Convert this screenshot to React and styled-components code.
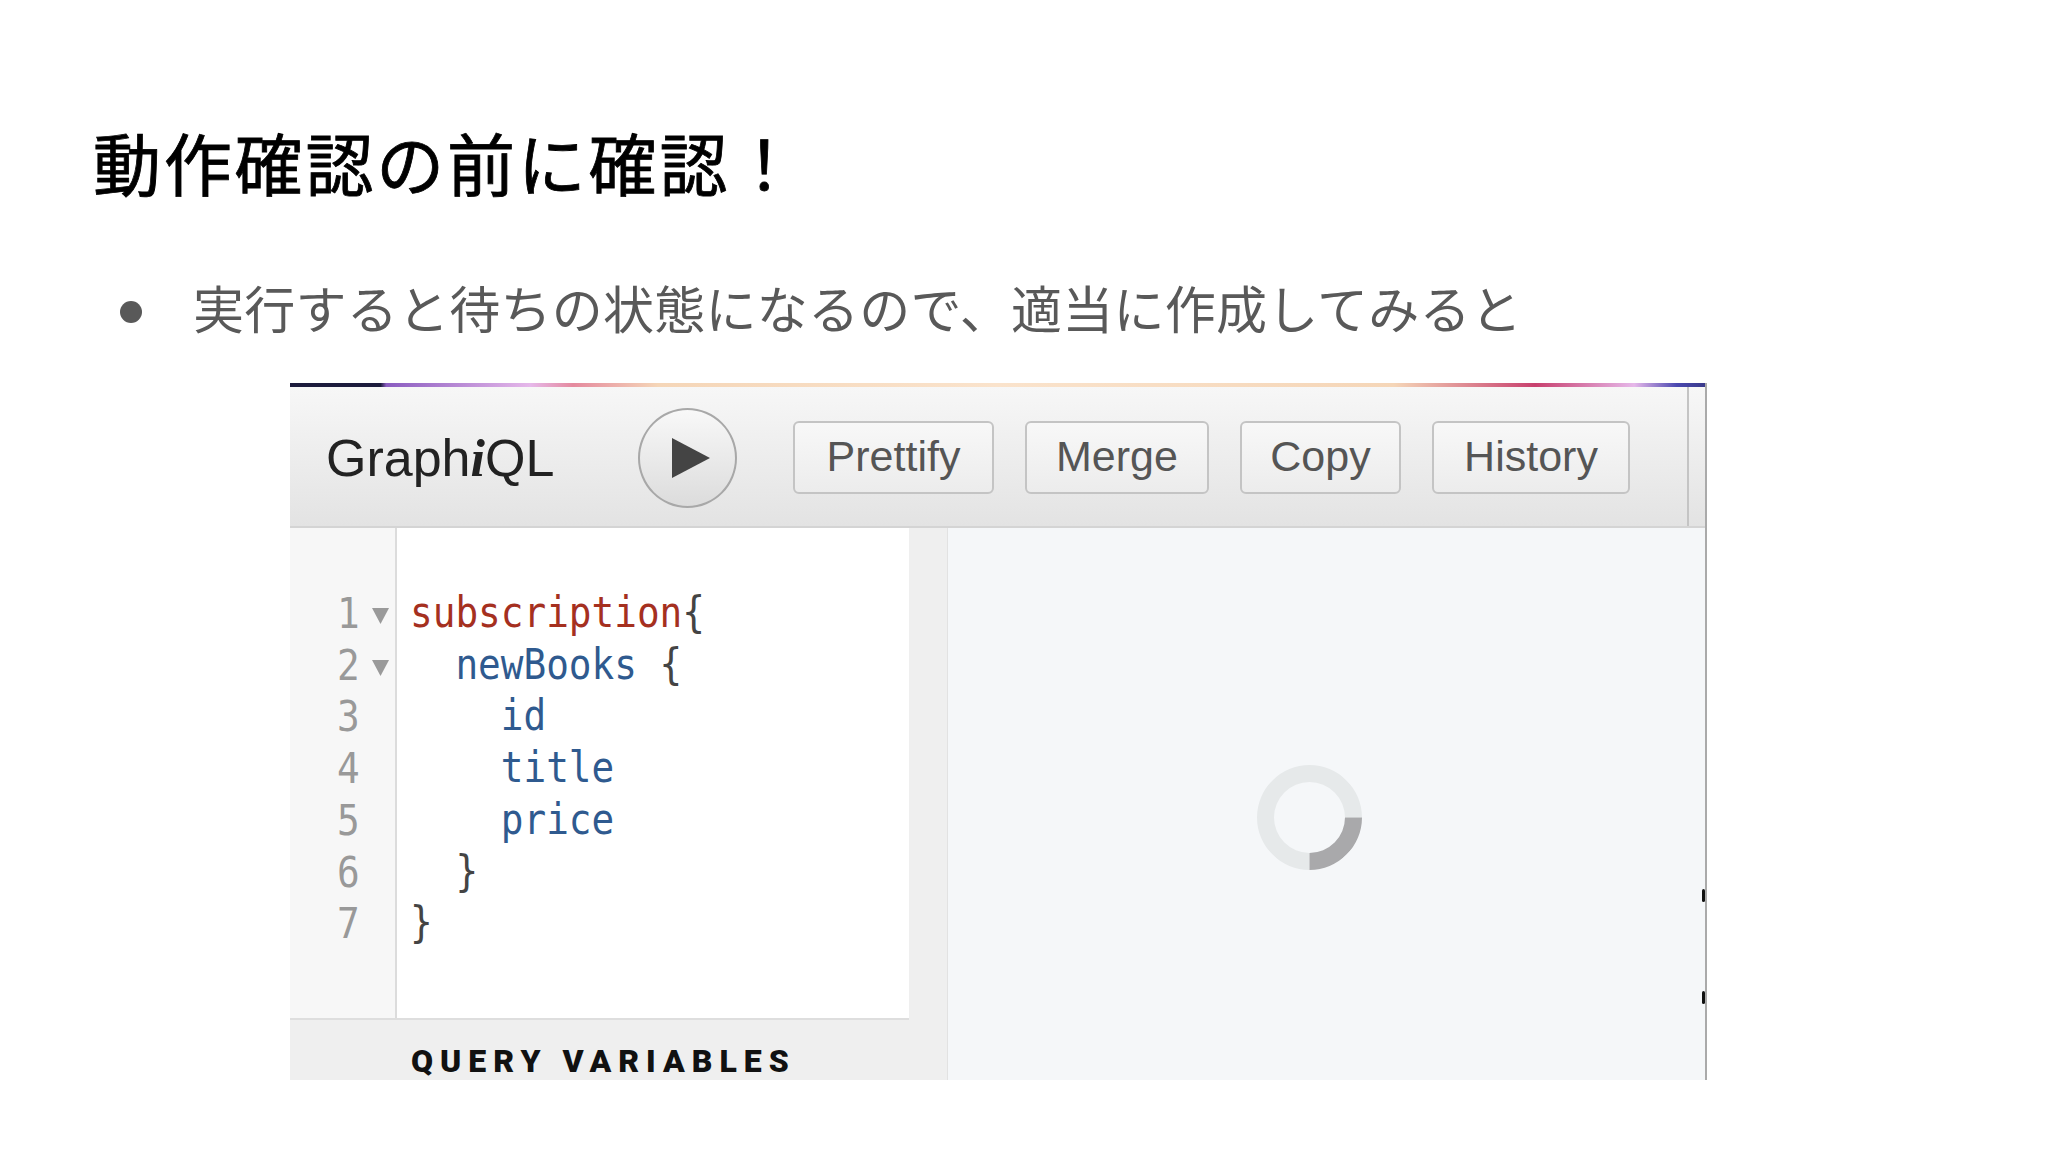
import styled, { createGlobalStyle } from "styled-components";

const GlobalStyle = createGlobalStyle`
  html, body {
    margin: 0;
    padding: 0;
    background: #fff;
  }
`;

const CODE_LINES = [
  { no: 1, fold: true, indent: 0, text: "subscription", color: "#a5301f", tail: "{" },
  { no: 2, fold: true, indent: 2, text: "newBooks", color: "#2f5a8f", tail: " {" },
  { no: 3, indent: 4, text: "id", color: "#2f5a8f" },
  { no: 4, indent: 4, text: "title", color: "#2f5a8f" },
  { no: 5, indent: 4, text: "price", color: "#2f5a8f" },
  { no: 6, indent: 2, tail: "}" },
  { no: 7, indent: 0, tail: "}" },
];

const BUTTONS = [
  { label: "Prettify", width: 201 },
  { label: "Merge", width: 184 },
  { label: "Copy", width: 161 },
  { label: "History", width: 198 },
];

const App = () => {
  return (
    <Slide>
      <GlobalStyle />
      <Title>動作確認の前に確認！</Title>
      <Bullet>
        <Dot />
        <BulletText>実行すると待ちの状態になるので、適当に作成してみると</BulletText>
      </Bullet>
      <Shot>
        <RainbowBar />
        <Toolbar>
          <Logo>
            Graph<em>i</em>QL
          </Logo>
          <PlayButton>
            <svg width="38" height="40" viewBox="0 0 38 40">
              <polygon points="0,0 38,20 0,40" fill="#444" />
            </svg>
          </PlayButton>
          <ButtonRow>
            {BUTTONS.map((b) => (
              <ToolButton key={b.label} $width={b.width}>
                {b.label}
              </ToolButton>
            ))}
          </ButtonRow>
        </Toolbar>
        <Panes>
          <EditorColumn>
            <Editor>
              <Gutter>
                {CODE_LINES.map((l) => (
                  <GutterRow key={l.no}>
                    <LineNo>{l.no}</LineNo>
                    {l.fold && (
                      <svg width="17" height="17" viewBox="0 0 17 17">
                        <polygon points="0,1 17,1 8.5,17" fill="#9a9a9a" />
                      </svg>
                    )}
                  </GutterRow>
                ))}
              </Gutter>
              <Code>
                {CODE_LINES.map((l) => (
                  <CodeLine key={l.no} $indent={l.indent}>
                    <Token $color={l.color}>{l.text}</Token>
                    {l.tail}
                  </CodeLine>
                ))}
              </Code>
            </Editor>
            <VariablesBar>QUERY VARIABLES</VariablesBar>
          </EditorColumn>
          <Divider />
          <ResultPane>
            <Spinner />
            <EdgeTick $top={361} />
            <EdgeTick $top={463} />
          </ResultPane>
        </Panes>
      </Shot>
    </Slide>
  );
};

const Slide = styled.div`
  width: 2048px;
  height: 1152px;
  overflow: hidden;
  background: #fff;
  font-family: "Noto Sans CJK JP", sans-serif;
`;
const Title = styled.h1`
  margin: 0;
  padding: 117px 0 0 93px;
  font-size: 68px;
  line-height: 90px;
  font-weight: 400;
  letter-spacing: 2.8px;
  -webkit-text-stroke: 0.8px #000;
  color: #000;
`;
const Bullet = styled.div`
  display: flex;
  align-items: center;
  margin-top: 65px;
  padding-left: 120px;
  height: 70px;
`;
const Dot = styled.span`
  width: 22px;
  height: 22px;
  border-radius: 50%;
  background: #595959;
  margin: 10px 51px 0 0;
`;
const BulletText = styled.span`
  font-size: 51px;
  line-height: 70px;
  font-weight: 400;
  letter-spacing: 0.25px;
  color: #595959;
`;
const Shot = styled.div`
  width: 1417px;
  height: 697px;
  margin: 41px 0 0 290px;
  overflow: hidden;
  display: flex;
  flex-direction: column;
  font-family: "Liberation Sans", Arial, sans-serif;
  border-right: 2px solid #aaaaaa;
  box-sizing: border-box;
`;
const RainbowBar = styled.div`
  height: 4px;
  flex: none;
  background: linear-gradient(
    90deg,
    #1c1b3c 0,
    #1c1b3c 6.4%,
    #8a5cc0 6.8%,
    #e6b8ea 17%,
    #e58a9e 20%,
    #f5d6b8 26%,
    #fae3cc 50%,
    #f5d6b8 78%,
    #c8406e 88%,
    #e6b8ea 95%,
    #4a48b0 98%,
    #3a3a8a 100%
  );
`;
const Toolbar = styled.div`
  height: 141px;
  flex: none;
  box-sizing: border-box;
  display: flex;
  align-items: center;
  padding: 2px 0 0 36px;
  background: linear-gradient(#f7f7f7, #e3e3e3);
  border-bottom: 2px solid #d4d4d4;
  position: relative;
  &::after {
    content: "";
    position: absolute;
    top: 0;
    bottom: 0;
    right: 16px;
    width: 2px;
    background: #c4c4c4;
  }
`;
const Logo = styled.div`
  width: 312px;
  font-size: 52px;
  color: #222;
  em {
    font-family: "Liberation Serif", serif;
    font-style: italic;
    font-weight: 700;
  }
`;
const PlayButton = styled.div`
  width: 99px;
  height: 100px;
  box-sizing: border-box;
  border-radius: 50%;
  border: 2px solid #a8a8a8;
  background: linear-gradient(#f8f8f8, #dcdcdc);
  display: flex;
  align-items: center;
  justify-content: center;
  padding-left: 6px;
  svg {
    display: block;
  }
`;
const ButtonRow = styled.div`
  display: flex;
  gap: 31px;
  margin-left: 56px;
`;
const ToolButton = styled.div`
  width: ${(p) => p.$width}px;
  height: 73px;
  box-sizing: border-box;
  border: 2px solid #c4c4c4;
  border-radius: 6px;
  background: linear-gradient(#f8f8f8, #ececec);
  color: #555;
  font-size: 43px;
  line-height: 67px;
  text-align: center;
`;
const Panes = styled.div`
  flex: 1;
  display: flex;
  min-height: 0;
`;
const EditorColumn = styled.div`
  width: 619px;
  display: flex;
  flex-direction: column;
`;
const Editor = styled.div`
  height: 492px;
  flex: none;
  display: flex;
  box-sizing: border-box;
  border-bottom: 2px solid #dedede;
  font-family: "DejaVu Sans Mono", monospace;
  font-size: 37.7px;
  line-height: 51.7px;
`;
const Gutter = styled.div`
  width: 107px;
  flex: none;
  box-sizing: border-box;
  padding-top: 60px;
  background: #f7f7f7;
  border-right: 2px solid #dcdcdc;
`;
const GutterRow = styled.div`
  display: flex;
  align-items: center;
  padding-left: 47px;
  svg {
    margin: 3px 0 0 11px;
  }
`;
const LineNo = styled.span`
  width: 24px;
  color: #999;
  transform: scaleY(1.14);
`;
const Code = styled.div`
  flex: 1;
  padding: 60px 0 0 13px;
  background: #fff;
  color: #444;
`;
const CodeLine = styled.div`
  padding-left: ${(p) => p.$indent * 22.7}px;
  white-space: pre;
  transform: scaleY(1.12);
`;
const Token = styled.span`
  color: ${(p) => p.$color};
`;
const VariablesBar = styled.div`
  flex: 1;
  background: #efefef;
  padding: 22px 0 0 121px;
  font-family: Roboto, "Liberation Sans", sans-serif;
  font-size: 32px;
  font-weight: 900;
  line-height: 38px;
  letter-spacing: 7px;
  color: #111;
`;
const Divider = styled.div`
  width: 39px;
  flex: none;
  box-sizing: border-box;
  background: #efefef;
  border-right: 1px solid #e2e2e2;
`;
const ResultPane = styled.div`
  flex: 1;
  position: relative;
  display: flex;
  align-items: center;
  justify-content: center;
  background: #f5f7f9;
  padding: 26px 35px 0 0;
`;
const Spinner = styled.div`
  width: 105px;
  height: 105px;
  box-sizing: border-box;
  border-radius: 50%;
  border: 17px solid #e6e9ea;
  border-right-color: #a9a9ab;
  transform: rotate(45deg);
`;
const EdgeTick = styled.span`
  position: absolute;
  right: 0;
  top: ${(p) => p.$top}px;
  width: 3px;
  height: 13px;
  border-radius: 2px;
  background: #111;
`;

export default App;
